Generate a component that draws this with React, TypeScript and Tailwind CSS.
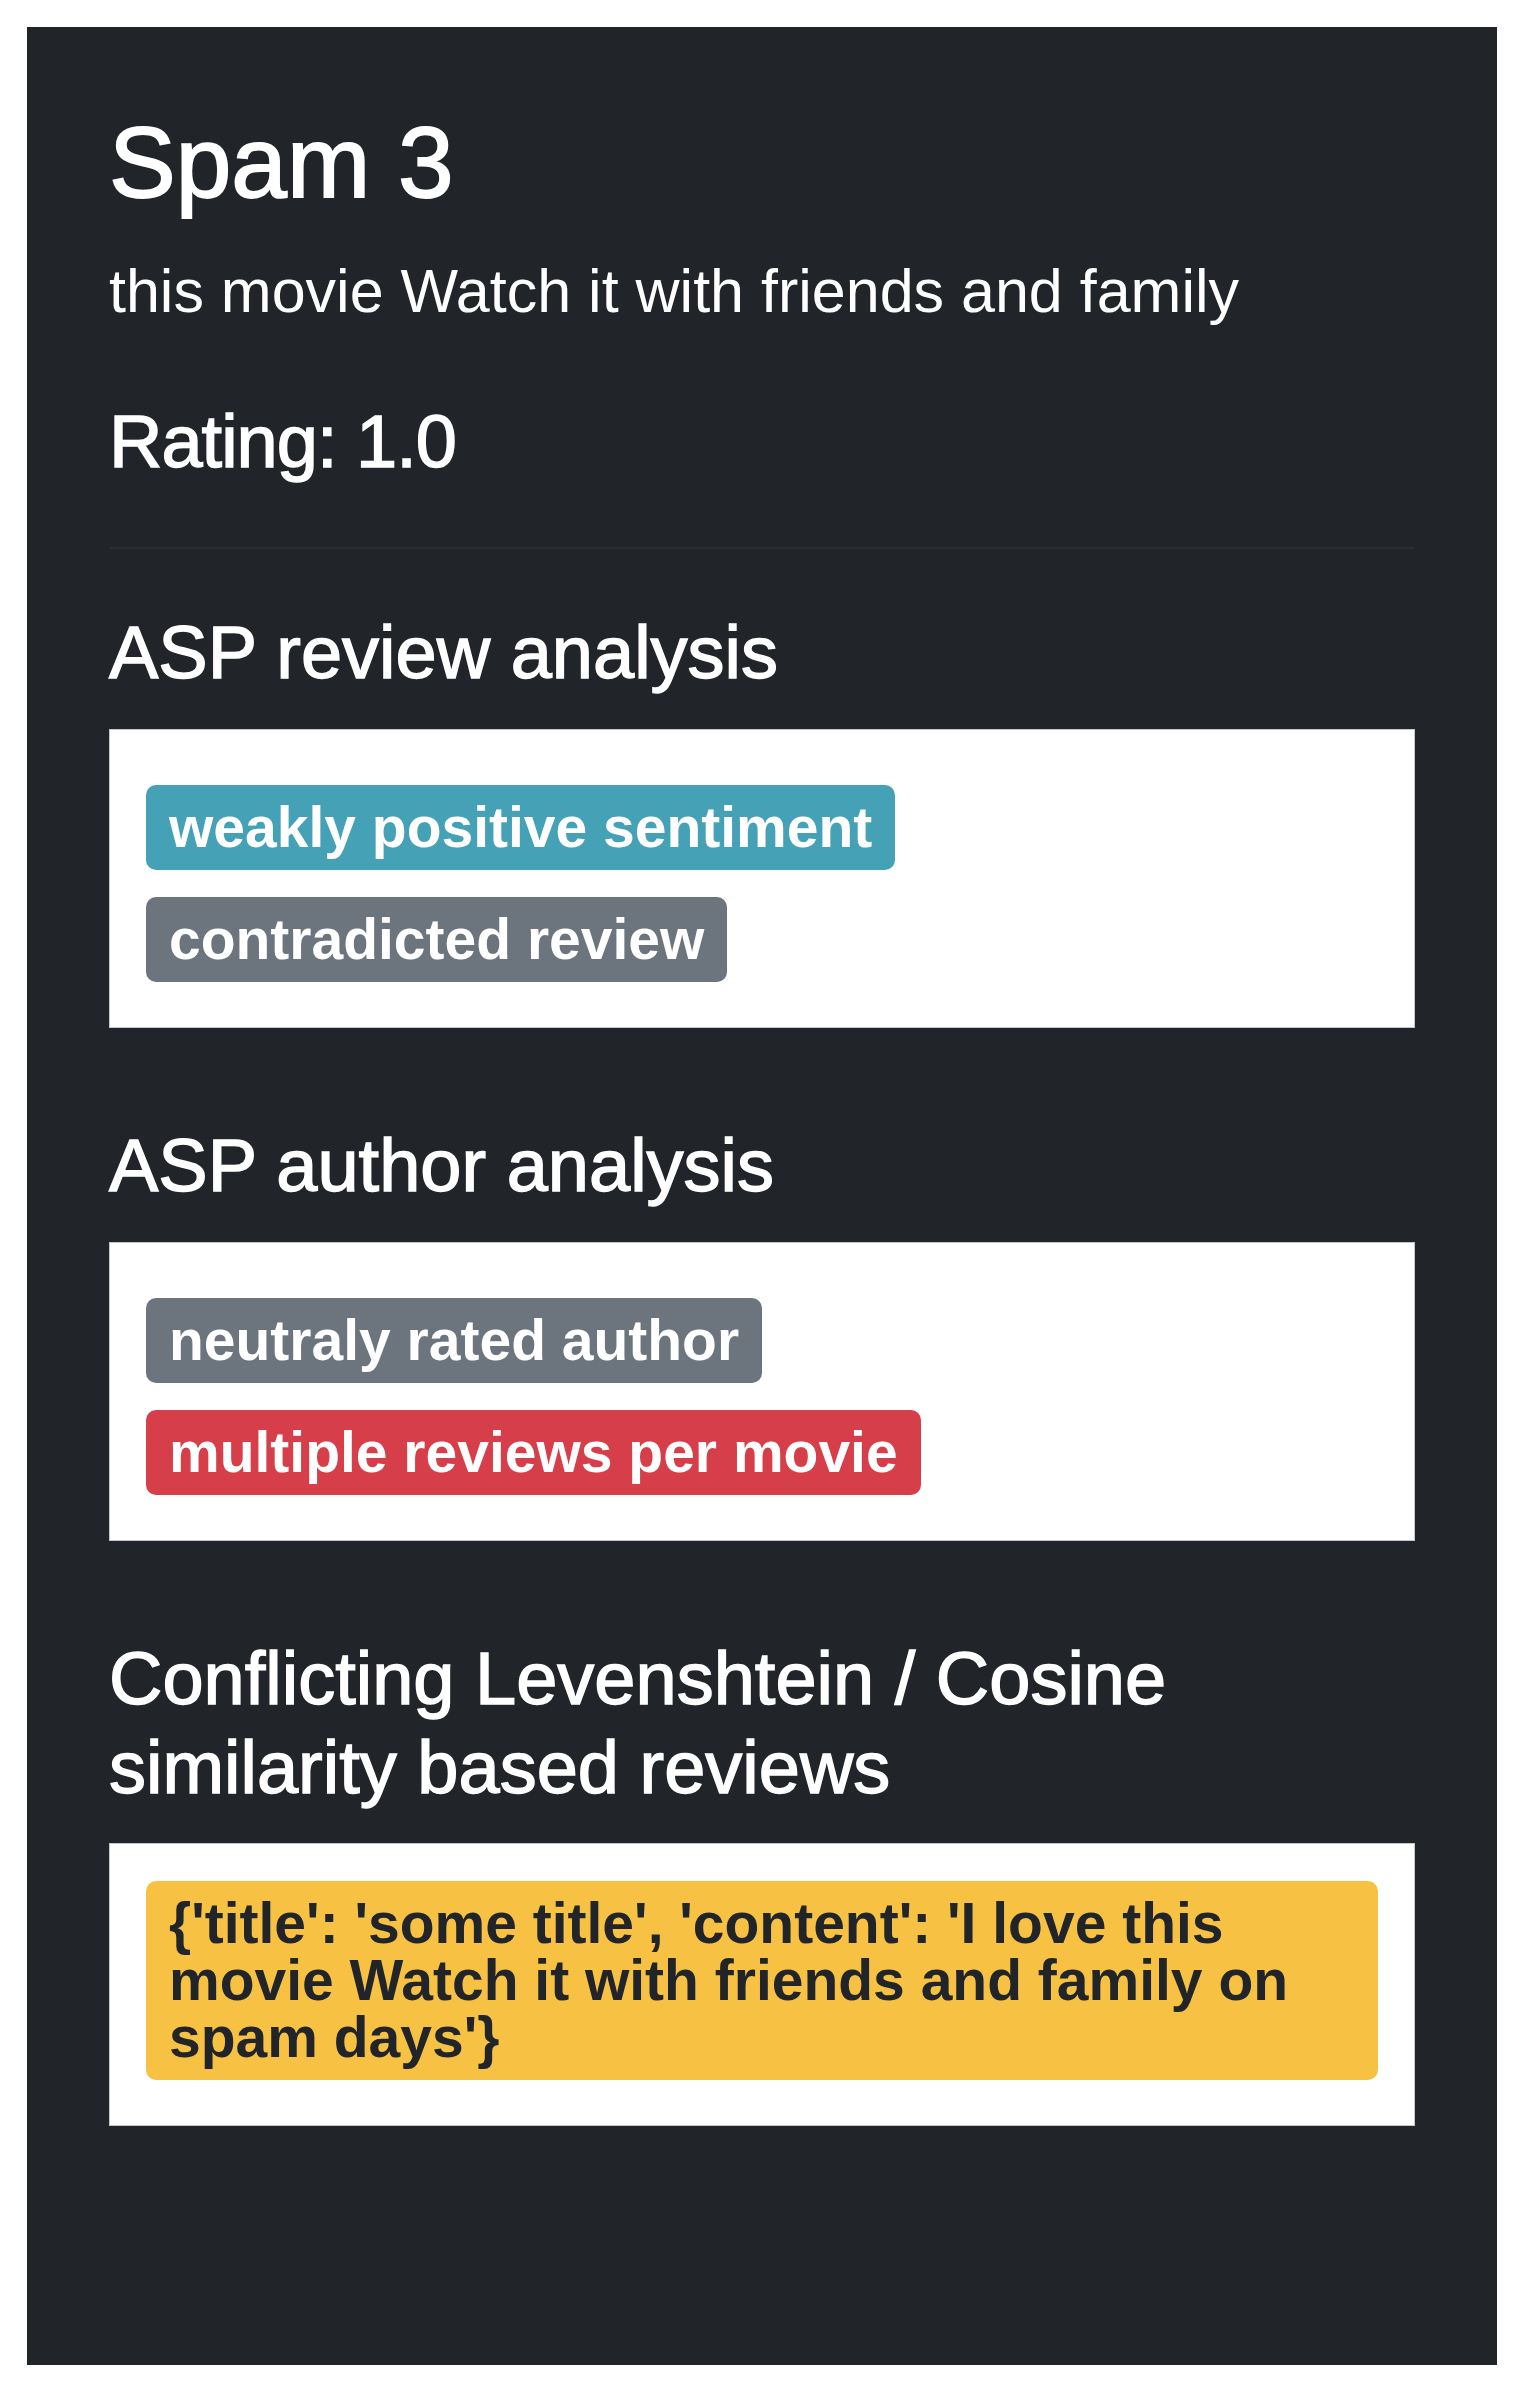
const badgeColors = {
    info: "bg-[#45a1b6] text-white",
    secondary: "bg-[#6c757d] text-white",
    danger: "bg-[#d63e4a] text-white",
    warning: "bg-[#f7c244] text-[#212529]",
};

type Variant = keyof typeof badgeColors;

interface BadgeProps {
    variant: Variant;
    children: React.ReactNode;
}

const Badge = ({ variant, children }: BadgeProps) => {
    return (
        <span
            className={`inline-block rounded-[10px] px-[23px] py-[14px] text-[57px] font-bold leading-none ${badgeColors[variant]}`}
        >
            {children}
        </span>
    );
};

// headings are a medium weight in the shot, Liberation only has 400/700
const heading = "text-[74px] leading-[1.2] font-medium [-webkit-text-stroke:1.4px_#fff]";

interface SectionProps {
    title: string;
    className: string;
    boxTop: string;
    children: React.ReactNode;
}

const Section = ({ title, className, boxTop, children }: SectionProps) => {
    return (
        <div className={className}>
            <h3 className={heading}>{title}</h3>
            <div
                className={`mt-[31px] flex flex-col items-start gap-[27px] border border-[#c4c6c9] bg-white px-[36px] pb-[45px] ${boxTop}`}
            >
                {children}
            </div>
        </div>
    );
};

const App = () => {
    return (
        <div className="min-h-screen bg-white pt-[27px] pl-[27px] pb-[22px] font-['Liberation_Sans',Arial,sans-serif]">
            <div className="w-[1470px] bg-[#212529] px-[82px] pt-[75px] pb-[239px] text-white">
                <h1 className="text-[100px] leading-[1.2] font-medium [-webkit-text-stroke:1.8px_#fff]">
                    Spam 3
                </h1>
                <p className="mt-[24px] text-[61px] leading-[1.5]">
                    this movie Watch it with friends and family
                </p>
                <h3 className={`mt-[60px] tracking-[-1px] ${heading}`}>Rating: 1.0</h3>
                <hr className="mt-[61px] border-t-2 border-[#2a2e33]" />

                <Section
                    title="ASP review analysis"
                    className="mt-[60px]"
                    boxTop="pt-[55px]"
                >
                    <Badge variant="info">weakly positive sentiment</Badge>
                    <Badge variant="secondary">contradicted review</Badge>
                </Section>

                <Section
                    title="ASP author analysis"
                    className="mt-[94px]"
                    boxTop="pt-[55px]"
                >
                    <Badge variant="secondary">neutraly rated author</Badge>
                    <Badge variant="danger">multiple reviews per movie</Badge>
                </Section>

                <Section
                    title="Conflicting Levenshtein / Cosine similarity based reviews"
                    className="mt-[94px]"
                    boxTop="pt-[37px]"
                >
                    <Badge variant="warning">
                        {"{'title': 'some title', 'content': 'I love this movie Watch it with friends and family on spam days'}"}
                    </Badge>
                </Section>
            </div>
        </div>
    );
};

export default App;
